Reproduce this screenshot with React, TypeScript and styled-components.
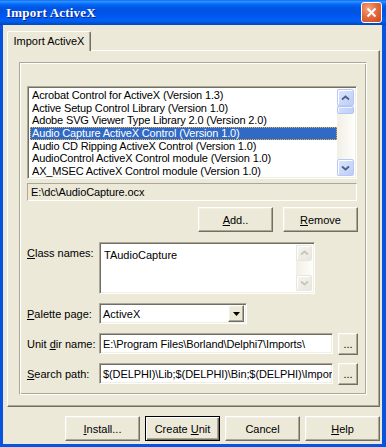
import React from "react";
import styled, { createGlobalStyle, css } from "styled-components";

const FONT = `"Liberation Sans", Arial, sans-serif`;

const GlobalStyle = createGlobalStyle`
  html, body { margin: 0; padding: 0; }
  body { width: 386px; height: 447px; overflow: hidden; background: #0054e3; }
  * { box-sizing: border-box; }
`;

const raised = css`
  border: 1px solid;
  border-color: #fff #716f64 #716f64 #fff;
  box-shadow: inset -1px -1px #aca899, inset 1px 1px #f1efe2;
`;

const sunken = css`
  border: 1px solid;
  border-color: #aca899 #fff #fff #aca899;
  box-shadow: inset 1px 1px #716f64, inset -1px -1px #f1efe2;
`;

const Window = styled.div`
  width: 386px;
  height: 447px;
  display: flex;
  flex-direction: column;
  font: 11px ${FONT};
  color: #000;
`;

const TitleBar = styled.div`
  height: 25px;
  flex: none;
  display: flex;
  align-items: center;
  justify-content: space-between;
  padding: 0 4px 0 6px;
  background: linear-gradient(
    to bottom,
    #0058ee 0%,
    #3593ff 4%,
    #288eff 8%,
    #127dff 12%,
    #036ffc 16%,
    #0262ee 22%,
    #0057e5 30%,
    #0054e3 40%,
    #0055eb 60%,
    #005bf5 72%,
    #0262ee 84%,
    #0052d6 92%,
    #0046c2 100%
  );
`;

const Caption = styled.span`
  font: bold 13px "Liberation Serif", "Times New Roman", serif;
  color: #fff;
  text-shadow: 1px 1px #0a1f8f;
  letter-spacing: 0.2px;
`;

const CloseBox = styled.div`
  width: 21px;
  height: 21px;
  border: 1px solid #fff;
  border-radius: 3px;
  background: radial-gradient(circle at 35% 30%, #f2a684 0%, #e36c40 45%, #cc4818 100%);
  display: flex;
  align-items: center;
  justify-content: center;
`;

const Frame = styled.div`
  flex: 1;
  display: flex;
  flex-direction: column;
  background: #ece9d8;
  border-style: solid;
  border-color: #0853e0;
  border-width: 0 4px 3px 3px;
  padding: 6px 2px 3px 4px;
`;

const TabStrip = styled.div`
  display: flex;
  height: 19px;
  position: relative;
  z-index: 1;
`;

const Tab = styled.div`
  width: 84px;
  height: 20px;
  background: #ece9d8;
  border-top: 1px solid #fff;
  border-left: 1px solid #fff;
  border-right: 1px solid #716f64;
  box-shadow: inset -1px 0 #aca899;
  border-radius: 2px 2px 0 0;
  display: flex;
  align-items: center;
  justify-content: center;
  padding-bottom: 1px;
`;

const TabSheet = styled.div`
  height: 357px;
  ${raised};
  box-shadow: inset -1px -1px #aca899;
  padding: 11px 12px 11px 11px;
`;

const Group = styled.div`
  height: 100%;
  border: 1px solid;
  border-color: #aca899 #fff #fff #aca899;
  box-shadow: inset 1px 1px #fff, inset -1px -1px #aca899;
  padding: 23px 8px 0 7px;
  display: flex;
  flex-direction: column;
`;

const ListBox = styled.div`
  width: 330px;
  height: 93px;
  background: #fff;
  ${sunken};
  padding: 2px;
  display: flex;
`;

const ListItems = styled.div`
  flex: 1;
`;

const ListRow = styled.div<{ $selected?: boolean }>`
  height: 12.7px;
  line-height: 12px;
  padding-left: 2px;
  white-space: nowrap;
  letter-spacing: -0.15px;
  ${(p) =>
    p.$selected &&
    css`
      background: #316ac5;
      color: #fff;
      outline: 1px dotted #f0b040;
      outline-offset: -1px;
    `}
`;

const ScrollBar = styled.div<{ $w: number }>`
  width: ${(p) => p.$w}px;
  flex: none;
  display: flex;
  flex-direction: column;
  justify-content: space-between;
  background: linear-gradient(to right, #f1efe6, #fdfdfa);
`;

const ScrollTop = styled.div`
  display: flex;
  flex-direction: column;
`;

const ScrollButton = styled.div<{ $disabled?: boolean; $size: number }>`
  width: ${(p) => p.$size}px;
  height: ${(p) => p.$size}px;
  border-radius: 2px;
  display: flex;
  align-items: center;
  justify-content: center;
  border: 1px solid ${(p) => (p.$disabled ? "#e8e6dd" : "#b7c9f4")};
  background: ${(p) =>
    p.$disabled
      ? "linear-gradient(135deg, #f5f4ef, #e9e7dd)"
      : "linear-gradient(135deg, #dbe6fe, #bccdf7)"};
  box-shadow: inset 1px 1px #fff;
`;

const Thumb = styled.div`
  width: 17px;
  height: 8px;
  border: 1px solid #b3c6f3;
  border-radius: 2px;
  background: linear-gradient(to right, #cfdcfd, #bfd0fa);
  box-shadow: inset 1px 1px #eef3ff;
`;

const PathBox = styled.div`
  width: 330px;
  height: 18px;
  margin-top: 4px;
  border: 1px solid;
  border-color: #aca899 #fff #fff #aca899;
  padding: 0 3px;
  display: flex;
  align-items: center;
  letter-spacing: -0.1px;
`;

const ActionRow = styled.div`
  display: flex;
  justify-content: flex-end;
  gap: 10px;
  margin-top: 6px;
`;

const Button = styled.button<{ $default?: boolean; $w?: number; $h?: number }>`
  width: ${(p) => p.$w ?? 75}px;
  height: ${(p) => p.$h ?? 25}px;
  flex: none;
  font: 11px ${FONT};
  color: #000;
  background: #ece9d8;
  padding: 0;
  ${raised};
  ${(p) =>
    p.$default &&
    css`
      border: 1px solid #000;
      box-shadow: inset 1px 1px #fff, inset -1px -1px #716f64, inset -2px -2px #aca899;
    `}
`;

const Form = styled.div`
  display: grid;
  grid-template-columns: 72px auto;
  grid-template-rows: 52px 21px 21px 21px;
  row-gap: 9px;
  margin-top: 10px;
  align-items: center;
`;

const Label = styled.div<{ $top?: boolean }>`
  white-space: nowrap;
  ${(p) =>
    p.$top &&
    css`
      align-self: start;
      padding-top: 5px;
    `}
`;

const Memo = styled.div`
  width: 216px;
  height: 52px;
  background: #fff;
  ${sunken};
  padding: 2px;
  display: flex;
`;

const MemoText = styled.div`
  flex: 1;
  padding: 4px 2px;
`;

const Combo = styled.div`
  width: 148px;
  height: 21px;
  background: #fff;
  ${sunken};
  padding: 2px;
  display: flex;
  align-items: center;
`;

const ComboText = styled.div`
  flex: 1;
  padding-left: 1px;
`;

const DropButton = styled.div`
  width: 16px;
  height: 17px;
  background: #ece9d8;
  ${raised};
  display: flex;
  align-items: center;
  justify-content: center;
`;

const FieldRow = styled.div`
  display: flex;
  align-items: center;
  gap: 5px;
`;

const Edit = styled.div`
  width: 234px;
  height: 21px;
  background: #fff;
  ${sunken};
  padding: 0 3px;
  display: flex;
  align-items: center;
  white-space: nowrap;
  overflow: hidden;
  letter-spacing: -0.1px;
`;

const ButtonBar = styled.div`
  display: flex;
  justify-content: flex-end;
  gap: 5px;
  margin-top: 9px;
`;

const Chevron = ({ down, color }: { down?: boolean; color: string }) => (
  <svg width="9" height="6" viewBox="0 0 9 6">
    <path
      d={down ? "M1 1.5 L4.5 4.5 L8 1.5" : "M1 4.5 L4.5 1.5 L8 4.5"}
      fill="none"
      stroke={color}
      strokeWidth="1.8"
    />
  </svg>
);

const items = [
  "Acrobat Control for ActiveX (Version 1.3)",
  "Active Setup Control Library (Version 1.0)",
  "Adobe SVG Viewer Type Library 2.0 (Version 2.0)",
  "Audio Capture ActiveX Control (Version 1.0)",
  "Audio CD Ripping ActiveX Control (Version 1.0)",
  "AudioControl ActiveX Control module (Version 1.0)",
  "AX_MSEC ActiveX Control module (Version 1.0)",
];

export default function App() {
  return (
    <>
      <GlobalStyle />
      <Window>
        <TitleBar>
          <Caption>Import ActiveX</Caption>
          <CloseBox>
            <svg width="11" height="11" viewBox="0 0 11 11">
              <path d="M1.5 1.5 L9.5 9.5 M9.5 1.5 L1.5 9.5" stroke="#fff" strokeWidth="2" />
            </svg>
          </CloseBox>
        </TitleBar>
        <Frame>
          <TabStrip>
            <Tab>Import ActiveX</Tab>
          </TabStrip>
          <TabSheet>
            <Group>
              <ListBox>
                <ListItems>
                  {items.map((t, i) => (
                    <ListRow key={t} $selected={i === 3}>
                      {t}
                    </ListRow>
                  ))}
                </ListItems>
                <ScrollBar $w={17}>
                  <ScrollTop>
                    <ScrollButton $size={17}>
                      <Chevron color="#4d6185" />
                    </ScrollButton>
                    <Thumb />
                  </ScrollTop>
                  <ScrollButton $size={17}>
                    <Chevron down color="#4d6185" />
                  </ScrollButton>
                </ScrollBar>
              </ListBox>
              <PathBox>E:\dc\AudioCapture.ocx</PathBox>
              <ActionRow>
                <Button>
                  <u>A</u>dd..
                </Button>
                <Button>
                  <u>R</u>emove
                </Button>
              </ActionRow>
              <Form>
                <Label $top>
                  <u>C</u>lass names:
                </Label>
                <Memo>
                  <MemoText>TAudioCapture</MemoText>
                  <ScrollBar $w={16}>
                    <ScrollButton $size={16} $disabled>
                      <Chevron color="#c8c6ba" />
                    </ScrollButton>
                    <ScrollButton $size={16} $disabled>
                      <Chevron down color="#c8c6ba" />
                    </ScrollButton>
                  </ScrollBar>
                </Memo>
                <Label>
                  <u>P</u>alette page:
                </Label>
                <Combo>
                  <ComboText>ActiveX</ComboText>
                  <DropButton>
                    <svg width="7" height="4" viewBox="0 0 7 4">
                      <path d="M0 0 H7 L3.5 4 Z" fill="#000" />
                    </svg>
                  </DropButton>
                </Combo>
                <Label>
                  Unit <u>d</u>ir name:
                </Label>
                <FieldRow>
                  <Edit>E:\Program Files\Borland\Delphi7\Imports\</Edit>
                  <Button $w={20} $h={22}>...</Button>
                </FieldRow>
                <Label>
                  <u>S</u>earch path:
                </Label>
                <FieldRow>
                  <Edit>$(DELPHI)\Lib;$(DELPHI)\Bin;$(DELPHI)\Imports</Edit>
                  <Button $w={20} $h={22}>...</Button>
                </FieldRow>
              </Form>
            </Group>
          </TabSheet>
          <ButtonBar>
            <Button>
              <u>I</u>nstall...
            </Button>
            <Button $default>
              Create <u>U</u>nit
            </Button>
            <Button>Cancel</Button>
            <Button>
              <u>H</u>elp
            </Button>
          </ButtonBar>
        </Frame>
      </Window>
    </>
  );
}
